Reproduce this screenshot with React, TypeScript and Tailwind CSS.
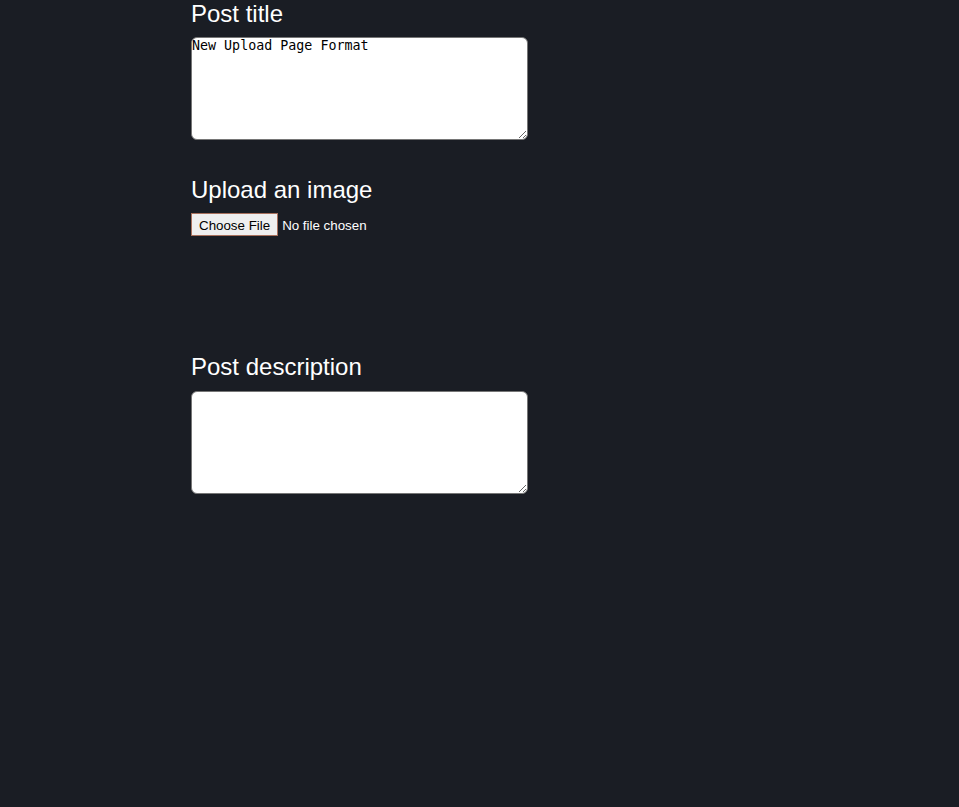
import React from "react";

export default function App() {
  return (
    <div className="min-h-[807px] w-full bg-[#1a1d24] text-white" style={{ fontFamily: '"Liberation Sans", Arial, sans-serif' }}>
      <div className="ml-[191px] flex w-[337px] flex-col">
        <label className="block text-[24px] leading-[28px] mb-[9px]">Post title</label>
        <textarea
          defaultValue="New Upload Page Format"
          className="block h-[103px] w-[337px] rounded-[6px] border border-[#767676] bg-white p-0 text-[13.333px] leading-[16px] text-black"
          style={{ fontFamily: '"DejaVu Sans Mono", monospace' }}
        />
        <label className="mt-[36px] block text-[24px] leading-[28px] mb-[9px]">Upload an image</label>
        <input
          type="file"
          className="block h-[23px] text-[13.333px] leading-[23px] text-white file:mr-[4px] file:h-[23px] file:border file:border-[#a8705c] file:bg-[#efefef] file:px-[7px] file:text-[13.333px] file:text-black"
        />
        <div className="h-[117px]" />
        <label className="block text-[24px] leading-[28px] mb-[10px]">Post description</label>
        <textarea
          className="block h-[103px] w-[337px] rounded-[6px] border border-[#767676] bg-white p-0 text-[13.333px] text-black"
          style={{ fontFamily: '"DejaVu Sans Mono", monospace' }}
        />
      </div>
    </div>
  );
}
